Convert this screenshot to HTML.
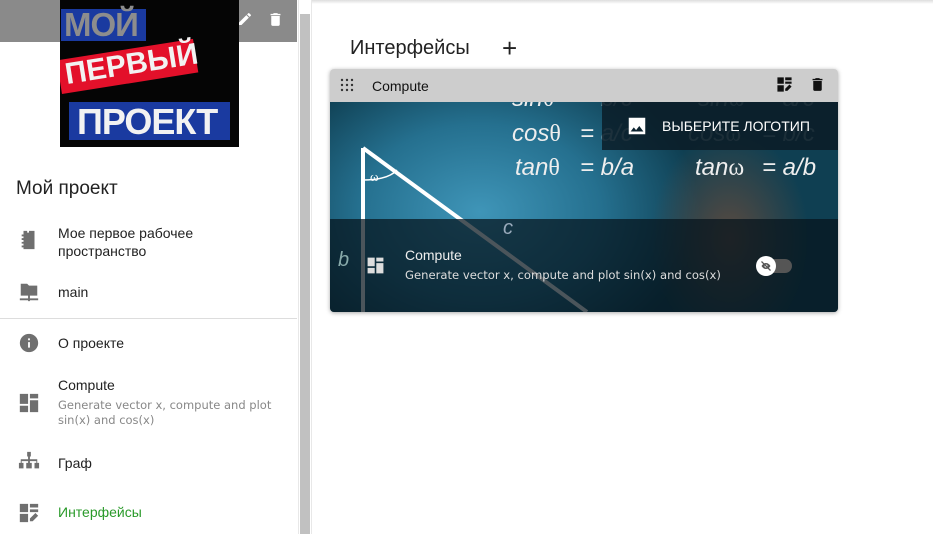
<!DOCTYPE html>
<html><head><meta charset="utf-8"><style>
*{margin:0;padding:0;box-sizing:border-box}
body{width:933px;height:534px;overflow:hidden;background:#fff;font-family:"Liberation Sans","DejaVu Sans",sans-serif;position:relative}
.abs{position:absolute}
.side{left:0;top:0;width:297px;height:534px;background:#fff}
.topbar{left:0;top:0;width:297px;height:42px;background:#8a8a8a}
.logo{left:60px;top:0;width:179px;height:147px;background:#050505;overflow:hidden}
.lt{position:absolute;font-weight:bold;color:#f2f2f2;font-family:"Liberation Sans",sans-serif}
.item{left:58px;font-size:14px;color:#222}
.ic{left:18px;width:22px;height:22px}
.scroll{left:298px;top:0;width:14px;height:534px;background:#fff;border-left:1px solid #e8e8e8;border-right:1px solid #e8e8e8}
.thumb{left:300px;top:14px;width:10px;height:520px;background:#c1c1c1}
.f{position:absolute;font-size:24px;color:#eee;font-style:italic;white-space:pre}
.f b{font-style:normal;font-weight:normal;font-family:"Liberation Serif",serif}
.dim{color:rgba(200,210,215,.45)}
</style></head><body>
<div class="abs side"></div>
<div class="abs topbar"></div>
<div class="abs logo">
 <div class="abs" style="left:1px;top:9px;width:85px;height:32px;background:#1a3aa0"></div>
 <div class="lt" style="left:4px;top:6px;font-size:33px;color:#8d8d8d;letter-spacing:-1px">МОЙ</div>
 <div class="abs" style="left:2px;top:60px;width:138px;height:34px;background:#e3102a;transform:rotate(-9deg);transform-origin:left bottom"></div>
 <div class="lt" style="left:8px;top:58px;font-size:30px;transform:rotate(-9deg);transform-origin:left bottom">ПЕРВЫЙ</div>
 <div class="abs" style="left:9px;top:102px;width:161px;height:38px;background:#1a3aa0"></div>
 <div class="lt" style="left:17px;top:101px;font-size:36px;letter-spacing:-1px">ПРОЕКТ</div>
</div>
<svg class="abs" style="left:237px;top:11px" width="16" height="16" viewBox="0 0 24 24"><path fill="#fff" d="M3 17.25V21h3.75L17.8 9.94l-3.75-3.75L3 17.25zM20.7 7.04a1 1 0 000-1.41l-2.34-2.34a1 1 0 00-1.41 0l-1.830 1.83 3.75 3.75 1.83-1.83z"/></svg>
<svg class="abs" style="left:267px;top:11px" width="17" height="17" viewBox="0 0 24 24"><path fill="#fff" d="M6 19c0 1.1.9 2 2 2h8c1.1 0 2-.9 2-2V7H6v12zM19 4h-3.5l-1-1h-5l-1 1H5v2h14V4z"/></svg>
<div class="abs" style="left:16px;top:178px;font-size:19px;color:#222">Мой проект</div>
<svg class="abs ic" style="top:229px" viewBox="0 0 24 24"><path fill="#6f6f6f" d="M6 2h4v2h2V2h6v20H6v-2H4v-2h2v-2H4v-2h2v-2H4v-2h2V8H4V6h2z"/></svg>
<div class="abs item" style="top:224px;line-height:18px">Мое первое рабочее<br>пространство</div>
<svg class="abs ic" style="top:281px" viewBox="0 0 24 24"><path fill="#6f6f6f" d="M3 3h7l2 2h9v11H3zM11 16h2v3h9v2h-9v1h-2v-1H2v-2h9z"/></svg>
<div class="abs item" style="top:284px">main</div>
<div class="abs" style="left:0;top:318px;width:297px;height:1px;background:#ddd"></div>
<svg class="abs ic" style="top:332px" viewBox="0 0 24 24"><path fill="#6f6f6f" d="M12 2a10 10 0 100 20 10 10 0 000-20zm1 15h-2v-6h2zm0-8h-2V7h2z"/></svg>
<div class="abs item" style="top:335px">О проекте</div>
<svg class="abs ic" style="top:392px" viewBox="0 0 24 24"><path fill="#6f6f6f" d="M2 2h9v11H2zM13 2h9v5h-9zM13 9h9v13h-9zM2 15h9v7H2z"/></svg>
<div class="abs item" style="top:377px">Compute</div>
<div class="abs" style="left:58px;top:398px;color:#888;line-height:15px;font-family:'DejaVu Sans',sans-serif;font-size:11.5px">Generate vector x, compute and plot<br>sin(x) and cos(x)</div>
<svg class="abs ic" style="top:451px;left:17px;width:24px" viewBox="0 0 24 24"><path fill="#6f6f6f" d="M10 1h4v5h-1v3h8v4h2v6h-5v-6h2v-2h-7v2h2v6H9v-6h2v-2H4v2h2v6H1v-6h2V9h8V6h-1z"/></svg>
<div class="abs item" style="top:455px">Граф</div>
<svg class="abs ic" style="top:502px" viewBox="0 0 24 24"><path fill="#6f6f6f" d="M2 2h9v9H2zM13 2h9v4h-9zM13 8h9v3h-9zM2 13h9v9H2zM13 21l0-3 6-6 3 3-6 6z"/></svg>
<div class="abs item" style="top:504px;color:#2a9a2a">Интерфейсы</div>
<div class="abs scroll"></div>
<div class="abs thumb"></div>
<div class="abs" style="left:312px;top:0;width:621px;height:4px;background:linear-gradient(#ddd,#fff)"></div>
<div class="abs" style="left:350px;top:37px;font-size:20px;color:#222">Интерфейсы</div>
<div class="abs" style="left:502px;top:33px;font-size:26px;color:#222">+</div>
<div class="abs" style="left:330px;top:69px;width:508px;height:243px;border-radius:4px;overflow:hidden;box-shadow:0 1px 4px rgba(0,0,0,.35)">
 <div class="abs" style="left:0;top:33px;width:508px;height:210px;background:radial-gradient(ellipse 220px 160px at 150px 110px,#3f95b8,#25708f 55%,#0f3f52 100%)"></div>
 <div class="abs" style="left:320px;top:60px;width:160px;height:220px;border-radius:50%;background:radial-gradient(#5a4a40,rgba(40,40,40,0) 70%)"></div>
 <div class="f" style="left:182px;top:16px">sin<b>θ</b></div><div class="f" style="left:250px;top:16px">= <span class="dim">b/c</span></div>
 <div class="f dim" style="left:368px;top:16px">sin<b>ω</b></div><div class="f dim" style="left:432px;top:16px">= a/c</div>
 <div class="f" style="left:182px;top:51px">cos<b>θ</b></div><div class="f" style="left:250px;top:51px">= <span class="dim">a/c</span></div>
 <div class="f dim" style="left:358px;top:51px">cos<b>ω</b></div><div class="f dim" style="left:432px;top:51px">= b/c</div>
 <div class="f" style="left:185px;top:85px">tan<b>θ</b></div><div class="f" style="left:250px;top:85px">= b/a</div>
 <div class="f" style="left:365px;top:85px">tan<b>ω</b></div><div class="f" style="left:432px;top:85px">= a/b</div>
 <svg class="abs" style="left:0;top:33px" width="508" height="210"><path d="M33 46 L33 210 M33 46 L257 210" stroke="#fff" stroke-width="4" fill="none"/><path d="M33 78 Q58 78 67 68" stroke="#fff" stroke-width="1.5" fill="none"/><text x="40" y="79" fill="#fff" font-size="13" font-family="Liberation Serif">ω</text></svg>
 <div class="abs" style="left:0;top:0;width:508px;height:33px;background:#cdcdcd"></div>
 <svg class="abs" style="left:10px;top:9px" width="14" height="14" viewBox="0 0 14 14"><g fill="#333"><circle cx="2" cy="2" r="1.2"/><circle cx="7" cy="2" r="1.2"/><circle cx="12" cy="2" r="1.2"/><circle cx="2" cy="7" r="1.2"/><circle cx="7" cy="7" r="1.2"/><circle cx="12" cy="7" r="1.2"/><circle cx="2" cy="12" r="1.2"/><circle cx="7" cy="12" r="1.2"/><circle cx="12" cy="12" r="1.2"/></g></svg>
 <div class="abs" style="left:42px;top:9px;font-size:14px;color:#111">Compute</div>
 <svg class="abs" style="left:446px;top:7px" width="17" height="17" viewBox="0 0 24 24"><path fill="#111" d="M2 2h9v9H2zM13 2h9v4h-9zM13 8h9v3h-9zM2 13h9v9H2zM13 21l0-3 6-6 3 3-6 6z"/></svg>
 <svg class="abs" style="left:479px;top:7px" width="17" height="17" viewBox="0 0 24 24"><path fill="#111" d="M6 19c0 1.1.9 2 2 2h8c1.1 0 2-.9 2-2V7H6v12zM19 4h-3.5l-1-1h-5l-1 1H5v2h14V4z"/></svg>
 <div class="abs" style="left:272px;top:33px;width:236px;height:48px;background:rgba(10,25,35,.8)"></div>
 <svg class="abs" style="left:296px;top:46px" width="22" height="22" viewBox="0 0 24 24"><path fill="#fff" d="M3 3h18v18H3zM5 18h14l-4.5-6-3.5 4.5-2.5-3z"/></svg>
 <div class="abs" style="left:332px;top:49px;font-size:14px;color:#fff">ВЫБЕРИТЕ ЛОГОТИП</div>
 <div class="abs" style="left:0;top:150px;width:508px;height:93px;background:rgba(5,20,28,.72)"></div>
 <div class="abs" style="left:8px;top:180px;font-size:20px;color:#8aa;font-style:italic">b</div>
 <div class="abs" style="left:173px;top:148px;font-size:20px;color:#9ab;font-style:italic">c</div>
 <svg class="abs" style="left:36px;top:187px" width="19" height="19" viewBox="0 0 24 24"><path fill="#ddd" d="M2 2h9v11H2zM13 2h9v5h-9zM13 9h9v13h-9zM2 15h9v7H2z"/></svg>
 <div class="abs" style="left:75px;top:178px;font-size:14px;color:#eee">Compute</div>
 <div class="abs" style="left:75px;top:199px;font-size:11.6px;color:#ddd;font-family:'DejaVu Sans',sans-serif">Generate vector x, compute and plot sin(x) and cos(x)</div>
 <div class="abs" style="left:430px;top:190px;width:32px;height:14px;border-radius:7px;background:#555"></div>
 <div class="abs" style="left:426px;top:187px;width:20px;height:20px;border-radius:50%;background:#fff"></div>
 <svg class="abs" style="left:430px;top:191px" width="12" height="12" viewBox="0 0 24 24"><path fill="#555" d="M12 6c4 0 7 3 9 6-2 3-5 6-9 6s-7-3-9-6c2-3 5-6 9-6zm0 3a3 3 0 100 6 3 3 0 000-6z"/><path d="M3 3l18 18" stroke="#555" stroke-width="2.5"/></svg>
</div>
</body></html>
